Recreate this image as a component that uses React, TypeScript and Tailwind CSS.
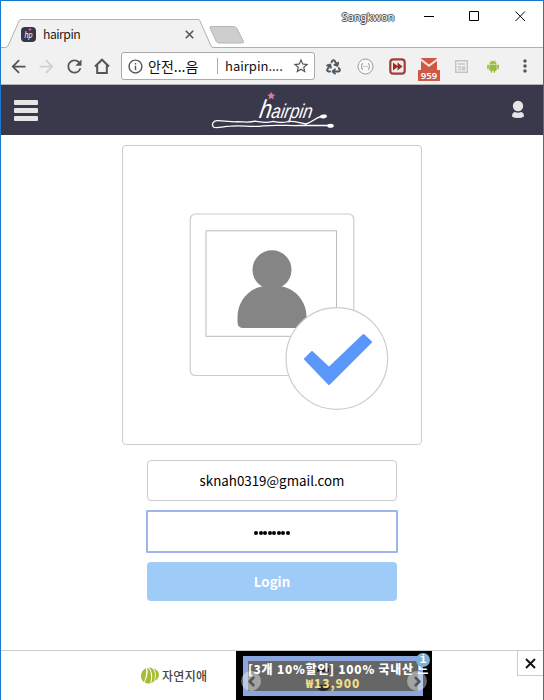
import type { ReactNode } from "react";
import { Recycle, ChevronLeft, ChevronRight } from "lucide-react";
import { MdArrowBack, MdArrowForward, MdRefresh, MdMoreVert, MdStarBorder, MdInfoOutline } from "react-icons/md";

const SANS = "font-['Noto_Sans_CJK_KR','Noto_Sans',sans-serif]";

function TitleBar() {
  return (
    <div className="relative flex h-[47px] bg-white">
      <svg className="absolute left-0 top-0" width="542" height="47" viewBox="1 1 542 47">
        <path d="M0 47.500H5Q7 47.500 8 46L19 21Q19.700 19.500 21 19.500H198Q199.500 19.500 200 21L211 46Q211.600 47.500 214 47.500H544V49H0Z" fill="#f1f1f1" stroke="#b0b0b0" />
        <path d="M211 26.500H233Q236 26.500 237 28.500L243.500 41.500Q244 43 242 43H219Q217 43 216 41L210 28Q209.500 26.500 211 26.500Z" fill="#cecece" stroke="#b7b7b7" />
      </svg>
      <div className="relative ml-5 mt-[21px] flex h-6 w-[176px] items-center">
        <div className="flex h-[15px] w-[15px] items-center justify-center rounded-[4px] bg-[#383748]">
          <svg width="15" height="15" viewBox="0 0 15 15">
            <text x="3.500" y="11" fill="#fff" fontFamily="Liberation Sans" fontStyle="italic" fontSize="9" textLength="8" lengthAdjust="spacingAndGlyphs">hp</text>
            <circle cx="9" cy="2.500" r="1.300" fill="#c7679a" />
          </svg>
        </div>
        <span className={`ml-[7px] text-[12.2px] leading-4 tracking-[-0.5px] text-[#222] ${SANS}`}>hairpin</span>
        <svg className="ml-auto mr-[3px]" width="9" height="9" viewBox="0 0 9 9" stroke="#555" strokeWidth="1.600"><path d="M.8 .8L8.200 8.200M8.200 .8L.8 8.200" /></svg>
      </div>
      <div className="relative ml-auto flex h-[31px] items-center">
        <span className="mr-5 font-['Noto_Sans',sans-serif] text-[11px] leading-4 tracking-[-0.2px] text-white [text-shadow:0_1px_0_#555,1px_0_0_#555,-1px_0_0_#555,0_-1px_0_#555,0_0_2px_#777]">Sangkwon</span>
        <svg width="129" height="30" viewBox="414 1 129 30" fill="none" stroke="#000">
          <path d="M424 15.500H434M469.500 10.500H478.500V19.500H469.500ZM515.500 10.500L525 20M525 10.500L515.500 20" />
        </svg>
      </div>
    </div>
  );
}

function Extension({ children }: { children: ReactNode }) {
  return <div className="relative flex h-9 w-8 items-center justify-center">{children}</div>;
}

function Toolbar() {
  return (
    <div className="flex h-[37px] items-center border-b border-[#b4b4b4] bg-[#f1f1f1] pl-[3px] text-[#555]">
      <div className="flex w-7 justify-center"><MdArrowBack size={21} /></div>
      <div className="flex w-7 justify-center text-[#d0d0d0]"><MdArrowForward size={21} /></div>
      <div className="flex w-7 justify-center"><MdRefresh size={21} /></div>
      <div className="flex w-7 justify-center">
        <svg width="16" height="17" viewBox="0 0 16 17" fill="none" stroke="currentColor" strokeWidth="2"><path d="M1 8.500L8 1.700L15 8.500M3.200 7.500V15H12.800V7.500" /></svg>
      </div>
      <div className={`ml-[5px] flex h-7 w-[194px] items-center rounded-[3px] border border-[#aaa] bg-white pl-[5px] text-[#111] ${SANS}`}>
        <MdInfoOutline size={17} className="shrink-0 text-[#555]" />
        <span className="ml-1 w-[56px] shrink-0 whitespace-nowrap text-[14px] leading-5">안전...음</span>
        <span className="ml-[13px] h-4 w-px shrink-0 bg-[#aaa]" />
        <span className="ml-[7px] w-[60px] shrink-0 whitespace-nowrap text-[13px] leading-5">hairpin....</span>
        <MdStarBorder size={18} className="ml-[7px] shrink-0 text-[#555]" />
      </div>
      <div className="ml-[2px] flex">
        <Extension><Recycle size={17} strokeWidth={2.800} className="text-[#505960]" /></Extension>
        <Extension>
          <svg width="17" height="17" viewBox="0 0 17 17" fill="none" stroke="#999"><circle cx="8.500" cy="8.500" r="7.500" fill="#f8f8f8" /><path d="M6 5.500Q4.500 5.500 4.800 7.200Q5 8.300 4 8.500Q5 8.700 4.800 10Q4.500 11.500 6 11.500M11 5.500Q12.500 5.500 12.200 7.200Q12 8.300 13 8.500Q12 8.700 12.200 10Q12.500 11.500 11 11.500" /><path d="M6.500 8.500H11" strokeDasharray="1 1" /></svg>
        </Extension>
        <Extension>
          <svg width="17" height="17" viewBox="0 0 17 17"><rect x="1.300" y="1.300" width="14.400" height="14.400" rx="3" fill="#eee" stroke="#a43c36" strokeWidth="2.200" /><path d="M4 4.500L8.500 8V4.500L13.500 8.500L8.500 12.500V9L4 12.500Z" fill="#982d27" /></svg>
        </Extension>
        <Extension>
          <svg className="-mt-[5px]" width="16" height="12" viewBox="0 0 16 12"><rect width="16" height="12" fill="#ce5944" /><path d="M0 .5L8 6.500L16 .5V3L8 9L0 3Z" fill="#f8e4df" /></svg>
          <span className="absolute bottom-[3px] left-[5px] flex h-[11px] w-[22px] items-center justify-center bg-[#ce5944] font-['Noto_Sans',sans-serif] text-[9.500px] font-semibold leading-none text-white">959</span>
        </Extension>
        <Extension>
          <svg width="13" height="13" viewBox="0 0 13 13" fill="none" stroke="#c4c4c4" strokeWidth="1.500"><rect x=".75" y=".75" width="11.500" height="11.500" /><path d="M3 4H10M3 7H6M3 9.500H6M7.500 7.250H9.500V9.500H7.500Z" /></svg>
        </Extension>
        <Extension>
          <svg width="12" height="13" viewBox="0 0 12 13" fill="#9abd3c"><path d="M2.400 4.300Q2.600 2.200 4 1.500L3.400.5L3.900.2L4.600 1.200Q6 .7 7.400 1.200L8.100.2L8.600.5L8 1.500Q9.400 2.300 9.600 4.300Z" /><path d="M2.300 4.800H9.700V10Q9.700 10.700 9 10.700H8.200V12.300Q7.400 13.400 6.700 12.300V10.700H5.300V12.300Q4.600 13.400 3.800 12.300V10.700H3Q2.300 10.700 2.300 10Z" /><rect x=".2" y="4.500" width="1.600" height="4.800" rx=".8" /><rect x="10.200" y="4.500" width="1.600" height="4.800" rx=".8" /><circle cx="4.400" cy="3" r=".4" fill="white" /><circle cx="7.600" cy="3" r=".4" fill="white" /></svg>
        </Extension>
        <Extension><MdMoreVert size={20} /></Extension>
      </div>
    </div>
  );
}

function SiteHeader() {
  return (
    <header className="flex h-[50px] items-center justify-between bg-[#3a394b] pl-[13px] pr-[18px]">
      <div className="flex w-6 flex-col gap-[3px]">
        <i className="h-[5px] rounded-[1px] bg-[#e5e5e5]" />
        <i className="h-[5px] rounded-[1px] bg-[#e5e5e5]" />
        <i className="h-[5px] rounded-[1px] bg-[#e5e5e5]" />
      </div>
      <svg className="-ml-[3px]" width="128" height="50" viewBox="209 85 128 50">
        <path d="M271.200 92.500L272.200 94.500L274.500 94.900L272.900 96.500L273.200 98.700L271.200 97.700L269.200 98.700L269.500 96.500L268 94.900L270.200 94.500Z" fill="#d879a7" stroke="#d879a7" strokeWidth=".7" />
        <g transform="translate(258.500 118) skewX(-10)" fontFamily="Liberation Sans" fontStyle="italic" fill="#fff">
          <text fontSize="22" textLength="53" lengthAdjust="spacingAndGlyphs"><tspan fontSize="26">h</tspan><tspan fontSize="20">airpin</tspan></text>
        </g>
        <path d="M321 116.500C315 118 311 123 306 124C299 123 295 120.500 288 121.500C282 123.500 278 122 273 121.300C266 123.500 261 122 255 121.200C249 123 243 121.500 235 121.800L218 120.600C213.500 120.200 211 124 213.500 127C216 129 222 126.500 231 126.200C243 125 251 127.500 263 125.800C278 124.500 289 126 300 125.500L330 125.500" fill="none" stroke="#fff" strokeWidth="1.300" />
        <ellipse cx="323.500" cy="116.500" rx="3.500" ry="1.900" fill="#fff" transform="rotate(-8 323.500 116.500)" />
        <ellipse cx="330.500" cy="125.800" rx="3.300" ry="2" fill="#fff" />
      </svg>
      <svg width="14" height="20" viewBox="511 101 14 20" fill="#e5e5e5"><circle cx="518" cy="107" r="5.200" /><path d="M512 117.500Q512 113.500 515 113.100Q518 114.300 521 113.100Q524 113.500 524 117.500Q522 119 518 119Q514 119 512 117.500Z" /></svg>
    </header>
  );
}

function ProfilePicture() {
  return (
    <div className="h-[300px] w-[300px] overflow-hidden rounded border border-[#ccc]">
      <svg width="298" height="298" viewBox="123 146 298 298" fill="none">
        <rect x="190.300" y="214" width="163.500" height="161.500" rx="5" stroke="#ccc" strokeWidth="1.200" />
        <rect x="206" y="230.800" width="130.500" height="105.500" stroke="#bbb" />
        <circle cx="272" cy="269.700" r="19.500" fill="#858585" />
        <path d="M262 286.500C248 289 237.500 302 237.500 317V322Q237.500 328 243.500 328H300.500Q306.500 328 306.500 322V317C306.500 302 296 289 282 286.500Z" fill="#858585" />
        <circle cx="336.800" cy="358.500" r="50.800" fill="#fff" stroke="#ccc" strokeWidth="1.200" />
        <path d="M305 359L312 352L329 368L363.500 335L371 342L329 384Z" fill="#5998fa" stroke="#5998fa" strokeWidth="2" strokeLinejoin="round" />
      </svg>
    </div>
  );
}

function LoginForm() {
  return (
    <form className={`mt-[15px] flex w-[252px] flex-col items-center ${SANS}`}>
      <input aria-label="email" readOnly defaultValue="sknah0319@gmail.com" className="h-[41px] w-[250px] rounded border border-[#ccc] bg-white text-center text-[13.333px] text-black outline-none" />
      <div className="mt-[9px] flex h-[43px] w-[252px] items-center justify-center rounded-[1px] border-2 border-[#9fb5ee] bg-white pt-[2px]">
        <div className="flex gap-[0.6px]">
          {Array.from({ length: 8 }, (_, i) => <i key={i} className="h-[4px] w-[4px] rounded-full bg-black" />)}
        </div>
      </div>
      <button type="button" className="mt-[9px] h-[39px] w-[250px] rounded bg-[#9fcbf9] text-[13.333px] font-bold text-white">Login</button>
    </form>
  );
}

function AdBanner() {
  return (
    <footer className={`flex h-[50px] border-t border-[#ccc] bg-white ${SANS}`}>
      <div className="flex w-[235px] items-center pl-[140px]">
        <svg width="18" height="17" viewBox="0 0 18 17" fill="#a5bd35"><path d="M4.800 1Q0 4 0 9Q0 13 3 15Q6 7 4.800 1Z" /><path d="M6 .3Q12 4 9.300 16.500Q5.500 17 3.600 15.300Q8 7 6 .3Z" /><path d="M8 .2Q16 1 13.200 14.200L10.200 16.300Q13.200 6 8 .2Z" /><path d="M12.800 1.300Q18 4 18 8Q17.500 12 14 13.700Q16 6 12.800 1.300Z" /></svg>
        <span className="ml-[3px] whitespace-nowrap text-[12px] font-medium tracking-[0.3px] text-[#444]">자연지애</span>
      </div>
      <div className="relative h-[49px] w-[196px] bg-black px-[7px] pt-[5px]">
        <div className="h-10 w-[180px] bg-[#8ba5df] p-[5px]">
          <div className="relative h-[30px] w-[170px] bg-[#666] pt-px">
            <svg className="absolute left-[68px] top-1" width="35" height="27" viewBox="0 0 35 27"><path d="M1 3H13V7H1ZM1 20H14Q14 26 7 26Q1 26 1 20Z" fill="#292929" /><path d="M18 5H28M18 8H28" stroke="#555" /></svg>
            <div className="relative flex h-[14px] w-[182px] items-center whitespace-nowrap text-[12px] font-black leading-[14px] tracking-[0.75px] text-white">[3개 10%할인] 100% 국내산 느</div>
            <div className="relative flex h-[14px] items-center justify-center text-[12px] font-black leading-[14px] tracking-[0.9px] text-[#f1df87]">₩13,900</div>
          </div>
        </div>
        <div className="absolute left-[5px] top-[20px] flex h-5 w-5 items-center justify-center rounded-full bg-white/40 text-[#555]"><ChevronLeft size={15} strokeWidth={4} /></div>
        <div className="absolute right-[5px] top-[20px] flex h-5 w-5 items-center justify-center rounded-full bg-white/40 text-[#555]"><ChevronRight size={15} strokeWidth={4} /></div>
        <div className="absolute right-[2px] top-[2px] flex h-[14px] w-[14px] items-center justify-center rounded-full bg-[#79b2d5] font-['Liberation_Mono',monospace] text-[12px] font-bold leading-none text-white">i</div>
      </div>
      <div className="ml-auto flex h-[25px] w-[26px] items-center justify-center border-b border-l border-[#ccc]">
        <svg width="11" height="11" viewBox="0 0 11 11" stroke="#111" strokeWidth="1.900"><path d="M1 1L10 10M10 1L1 10" /></svg>
      </div>
    </footer>
  );
}

export default function App() {
  return (
    <div className="flex h-[700px] w-[544px] flex-col overflow-hidden border-x border-t border-[#1979ca] bg-white">
      <TitleBar />
      <Toolbar />
      <SiteHeader />
      <main className="flex flex-1 flex-col items-center pt-[10px]">
        <ProfilePicture />
        <LoginForm />
      </main>
      <AdBanner />
    </div>
  );
}
